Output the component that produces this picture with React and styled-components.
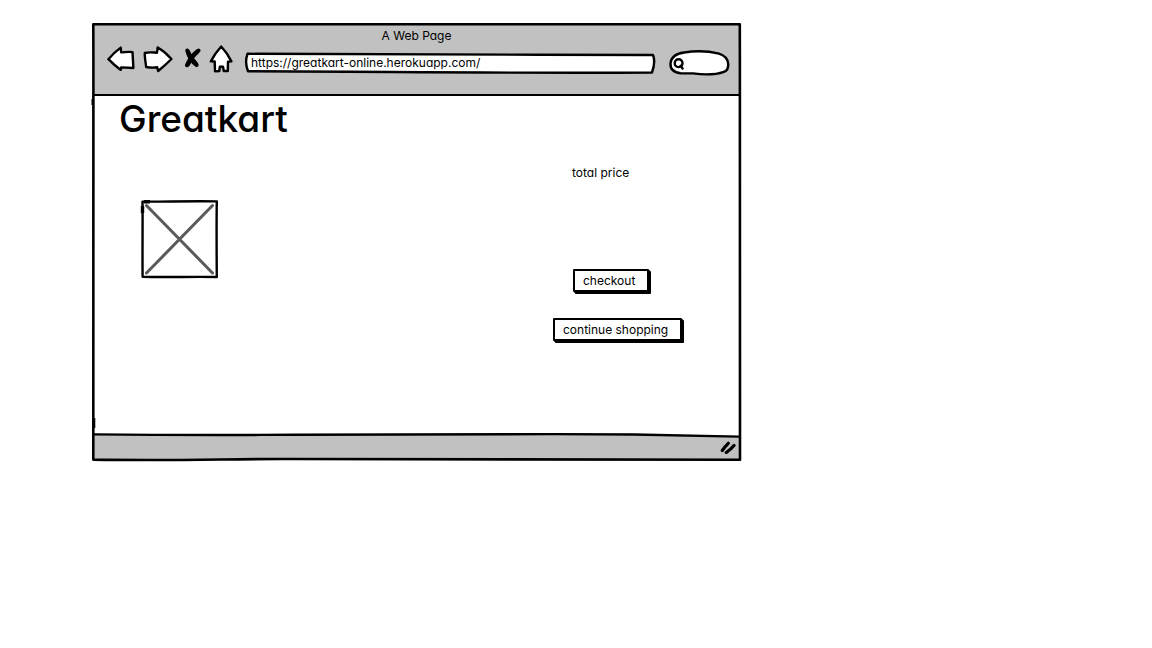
import React from "react";
import styled, { createGlobalStyle } from "styled-components";

const GlobalStyle = createGlobalStyle`
  * { box-sizing: border-box; }
  body {
    margin: 0;
    background: #fff;
    color: #000;
    font-family: Inter, "Liberation Sans", sans-serif;
    font-size: 12px;
    line-height: 16px;
    font-feature-settings: "cv11";
  }
`;

const Page = styled.div`
  padding: 23px 92px;
`;

const BrowserWindow = styled.section`
  position: relative;
  display: flex;
  flex-direction: column;
  max-width: 649px;
  padding: 2px;
  background: #fff;
`;

const Chrome = styled.header`
  padding: 3px 9px 20px 13px;
  border-bottom: 2px solid #000;
  background: #c1c1c1;
`;

const WindowTitle = styled.div`
  padding-right: 4px;
  text-align: center;
`;

const Toolbar = styled.div`
  display: flex;
  align-items: center;
  gap: 12px;
  height: 30px;
`;

const NavButtons = styled.nav`
  display: flex;
  gap: 8px;
`;

const NavButton = styled.button`
  width: ${(p) => p.$width}px;
  height: 30px;
  padding: 0;
  border: 0;
  background: none;
  cursor: pointer;

  svg { display: block; }
`;

const Field = styled.label`
  position: relative;
  display: block;
  min-width: 0;
  height: ${(p) => p.$height}px;
  margin-top: 8px;
  flex: ${(p) => (p.$width ? `0 0 ${p.$width}px` : "1")};
`;

const Sketch = styled.svg`
  position: absolute;
  inset: 0;
  width: 100%;
  height: 100%;
  overflow: visible;
  pointer-events: none;
`;

const FieldInput = styled.input`
  position: relative;
  display: block;
  width: 100%;
  height: 100%;
  padding: 0 6px 2px ${(p) => p.$indent}px;
  border: 0;
  outline: 0;
  background: none;
  color: #000;
  font: inherit;
  font-feature-settings: inherit;
`;

const Content = styled.main`
  min-height: 338px;
  padding: 1px 54px 0 25px;
`;

const Brand = styled.h1`
  margin: 0;
  font-size: 37px;
  line-height: 44px;
  font-weight: 500;
`;

const Columns = styled.div`
  display: flex;
  flex-wrap: wrap;
  justify-content: space-between;
  padding-top: 24px;
`;

const Picture = styled.svg`
  display: block;
  width: 77px;
  height: 78px;
  margin: 35px 0 0 22px;
  overflow: visible;
`;

const Summary = styled.div`
  display: flex;
  flex-direction: column;
  align-items: flex-start;
  width: 132px;
`;

const Price = styled.p`
  margin: 0 0 88px 19px;
`;

const Button = styled.button`
  height: 23px;
  margin: 0 0 26px ${(p) => p.$indent}px;
  padding: 0 12px 0 8px;
  border: 2px solid #000;
  border-radius: 1px;
  box-shadow: 1px 1px #000, 2px 2px #000;
  background: #fff;
  color: #000;
  font: inherit;
  white-space: nowrap;
  cursor: pointer;
`;

const StatusBar = styled.footer`
  position: relative;
  display: flex;
  align-items: center;
  justify-content: flex-end;
  height: 25px;
  padding-right: 3px;
  background: #c1c1c1;
`;

const Edge = styled.svg`
  position: absolute;
  top: 0;
  left: 0;
  width: 100%;
  height: 5px;
  overflow: visible;
`;

const outline = {
  fill: "#fff",
  stroke: "#000",
  strokeWidth: 2.4,
  strokeLinejoin: "round",
  strokeLinecap: "round",
};

export default function App() {
  return (
    <>
      <GlobalStyle />
      <Page>
        <BrowserWindow>
          <Chrome>
            <WindowTitle>A Web Page</WindowTitle>
            <Toolbar>
              <NavButtons aria-label="Browser">
                <NavButton $width={28} aria-label="Back">
                  <svg width="28" height="30" {...outline}>
                    <path d="M1.4 15.2C5 11 9 7 13.7 3.6L14.2 8.4C18 8.2 22 7.5 25.5 8.1L26.4 24L14.2 23.4L13.8 25.9C9 22.5 5 19 1.4 15.2Z" />
                  </svg>
                </NavButton>
                <NavButton $width={30} aria-label="Forward">
                  <svg width="30" height="30" {...outline}>
                    <path d="M1.8 9C6 7.8 10 8.5 14 8.7L14.7 3.5C20 6.5 24.5 10.5 28.4 15C24.5 19 20 23 15.2 27L14.1 23.2C10 24 6.5 23.6 3.2 23C2.5 18 1.6 13 1.8 9Z" />
                  </svg>
                </NavButton>
                <NavButton $width={20} aria-label="Stop">
                  <svg width="20" height="30" fill="none" stroke="#000" strokeLinecap="round">
                    <path d="M6.3 6.5C8 13 11.5 18 15.5 21M17.5 6.5C12 11 8 16 6 21.2" strokeWidth="4" />
                    <path d="M7 8C9 13 12 17 15 20M16 8C12 11 9 16 7 20" strokeWidth="4.5" />
                  </svg>
                </NavButton>
                <NavButton $width={24} aria-label="Home">
                  <svg width="24" height="30" {...outline}>
                    <path d="M12.2 2.5C9 6 5 11 1.8 17.4L5.7 17.5L6 27.2L10.3 27L10.8 22.8L14 22.7L14.8 27L18.8 27L19 17.7L22.4 17.4C19.5 11.5 16 6.5 12.2 2.5Z" />
                  </svg>
                </NavButton>
              </NavButtons>
              <Field $height={22}>
                <Sketch viewBox="0 0 412 22" preserveAspectRatio="none" aria-hidden="true">
                  <path
                    {...outline}
                    d="M2.5 1.8C120 1 270 3.2 408 3C410 8 409 15 407 20.5C270 21.5 130 19.5 3 19.3C.5 13 1 6 2.5 1.8Z"
                    vectorEffect="non-scaling-stroke"
                  />
                </Sketch>
                <FieldInput
                  type="text"
                  aria-label="Address"
                  $indent={6}
                  defaultValue="https://greatkart-online.herokuapp.com/"
                />
              </Field>
              <Field $width={61} $height={26}>
                <Sketch viewBox="0 0 61 26" aria-hidden="true">
                  <path
                    {...outline}
                    d="M1.5 13.5C2 7 8 3.5 15 2.5C25 .9 39 .9 50 3.7C57 6 59 10 59.2 14C59.5 18 58.5 20.5 55 21.8C46 25 33 24.6 24 23.4L11.5 23.3C5 22.5 1.2 19 1.5 13.5Z"
                  />
                  <circle cx="9.6" cy="13.2" r="3.9" {...outline} />
                  <path d="M11.6 15.7L13.6 18.5" fill="none" stroke="#000" strokeWidth="2.4" strokeLinecap="round" />
                </Sketch>
                <FieldInput type="text" aria-label="Search" $indent={18} />
              </Field>
            </Toolbar>
          </Chrome>
          <Content>
            <Brand>Greatkart</Brand>
            <Columns>
              <Picture viewBox="0 0 77 78" role="img" aria-label="Product image">
                <path
                  d="M1.5 1.6C20 1.9 50 .8 75.8 1.4C75.4 25 75.6 52 75.8 77C50 76.6 25 77.4 1.6 76.8C1.3 50 1.8 25 1.5 1.6Z"
                  {...outline}
                />
                <path d="M1.5 6V13M3 1.8H9" fill="none" stroke="#000" strokeWidth="3.4" />
                <path d="M5.5 5.5L71.5 73M71.5 5.5L5.5 73" stroke="#5a5a5a" strokeWidth="3" strokeLinecap="round" />
              </Picture>
              <Summary>
                <Price>total price</Price>
                <Button type="button" $indent={20}>checkout</Button>
                <Button type="button" $indent={0}>continue shopping</Button>
              </Summary>
            </Columns>
          </Content>
          <StatusBar>
            <Edge viewBox="0 0 645 5" preserveAspectRatio="none" aria-hidden="true">
              <path d="M0 0H540L645 2V0Z" fill="#fff" />
              <path d="M0 .4C100 1.4 130 1 200 .8C330 0 430 -.2 540 .5C580 1 615 2 645 2.6" fill="none" stroke="#000" strokeWidth="2.4" />
            </Edge>
            <svg width="16" height="14" fill="none" stroke="#000" strokeWidth="3.2" strokeLinecap="round" aria-hidden="true">
              <path d="M2.3 10.5C4 8 6 5.5 8.3 3.3M6.3 12.5C9 10.5 11.5 8.5 14 5.5" />
            </svg>
          </StatusBar>
          <Sketch viewBox="0 0 649 438" preserveAspectRatio="none" aria-hidden="true">
            <path
              {...outline}
              fill="none"
              strokeWidth="2.6"
              d="M1.3 1.2H647.8C648.2 150 647.4 300 648 436.8C500 437 350 437 200 436C140 435.6 90 438 1.3 436.6C1 300 1.8 150 1.3 1.2Z"
              vectorEffect="non-scaling-stroke"
            />
            <path d="M.8 76V82M2 395V405" stroke="#000" strokeWidth="2.6" />
          </Sketch>
        </BrowserWindow>
      </Page>
    </>
  );
}
